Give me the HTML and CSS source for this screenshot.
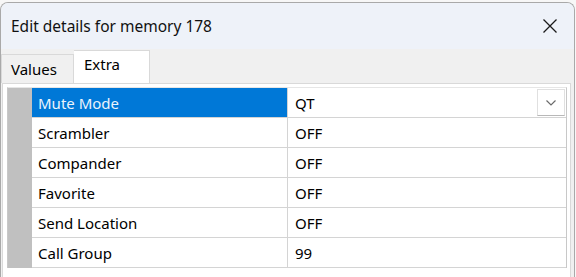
FILE: index.html
```html
<!DOCTYPE html>
<html lang="en">
<head>
  <meta charset="UTF-8">
  <title>Edit details for memory 178</title>
  <link rel="stylesheet" href="styles.css">
</head>
<body>

  <div class="window">
    <div class="title-bar">
      <span class="title">Edit details for memory 178</span>
      <button class="close-btn" aria-label="Close">
        <svg width="16" height="16" viewBox="0 0 16 16">
          <path d="M1.5 1.5 L14.5 14.5 M14.5 1.5 L1.5 14.5" stroke="#1a1a1a" stroke-width="1.3" fill="none"/>
        </svg>
      </button>
    </div>

    <div class="tab-strip">
      <div class="tab">Values</div>
      <div class="tab active">Extra</div>
    </div>

    <section class="tab-page">
      <div class="grid">
        <div class="row-header"></div>
        <div class="cell name selected">Mute Mode</div>
        <div class="cell value">
          QT
          <span class="drop-btn">
            <svg width="12" height="8" viewBox="0 0 12 8">
              <path d="M1.5 1.5 L6 6 L10.5 1.5" stroke="#6b6b6b" stroke-width="1.2" fill="none"/>
            </svg>
          </span>
        </div>

        <div class="row-header"></div>
        <div class="cell name">Scrambler</div>
        <div class="cell value">OFF</div>

        <div class="row-header"></div>
        <div class="cell name">Compander</div>
        <div class="cell value">OFF</div>

        <div class="row-header"></div>
        <div class="cell name">Favorite</div>
        <div class="cell value">OFF</div>

        <div class="row-header"></div>
        <div class="cell name">Send Location</div>
        <div class="cell value">OFF</div>

        <div class="row-header"></div>
        <div class="cell name">Call Group</div>
        <div class="cell value">99</div>
      </div>
    </section>
  </div>

</body>
</html>
```

FILE: styles.css
```css
body {
  margin: 0;
  background-color: #f7f7f7;
  font-family: 'Noto Sans', 'Open Sans', sans-serif;
  color: #000;
  overflow: hidden;
}

.window {
  margin-top: 2px;
  margin-right: 1px;
  height: 274px;
  border: 1px solid #a9a9a9;
  border-bottom: none;
  border-radius: 8px 8px 0 0;
  background-color: #f0f0f0;
  display: flex;
  flex-direction: column;
  overflow: hidden;
}

.title-bar {
  height: 46px;
  flex-shrink: 0;
  background-color: #eef2f9;
  display: flex;
  align-items: center;
  justify-content: space-between;
  padding-left: 10px;
}

.title {
  font-size: 15.5px;
  color: #111;
}

.close-btn {
  background: none;
  border: none;
  width: 46px;
  height: 46px;
  margin-right: 1px;
  display: flex;
  align-items: center;
  justify-content: center;
  padding: 0;
}

.tab-strip {
  display: flex;
  align-items: flex-end;
  height: 34px;
  flex-shrink: 0;
}

.tab {
  font-size: 15px;
  height: 28px;
  width: 53px;
  padding: 0 9px;
  border: 1px solid #d9d9d9;
  border-bottom: none;
  background-color: #f0f0f0;
  display: flex;
  align-items: center;
}

.tab.active {
  box-sizing: border-box;
  height: 33px;
  width: 76px;
  padding: 3px 10px 0;
  background-color: #fff;
  border-left: none;
  align-items: flex-start;
}

.tab-page {
  flex: 1;
  background-color: #fff;
  border: 1px solid #d9d9d9;
  border-bottom: none;
  margin: 0 3px 0 1px;
  padding: 3px 0 0 4px;
}

.grid {
  display: grid;
  grid-template-columns: 24px 256px 278px;
  border: 1px solid #c8c8c8;
  border-top-color: #e6e6e6;
  border-bottom: none;
  width: 558px;
}

.row-header {
  background-color: #c0c0c0;
  height: 30px;
}

.cell {
  height: 29px;
  border-bottom: 1px solid #d4d4d4;
  font-size: 15px;
  display: flex;
  align-items: center;
  padding-left: 6px;
}

.name {
  border-right: 1px solid #d4d4d4;
}

.name.selected {
  background-color: #0078d7;
  color: #eaf3fc;
}

.value {
  position: relative;
  padding-left: 7px;
}

.drop-btn {
  position: absolute;
  right: 1px;
  top: 1px;
  width: 26px;
  height: 25px;
  border: 1px solid #e0e0e0;
  border-bottom: 1px solid #b8b8b8;
  background-color: #fff;
  display: flex;
  align-items: center;
  justify-content: center;
}
```
